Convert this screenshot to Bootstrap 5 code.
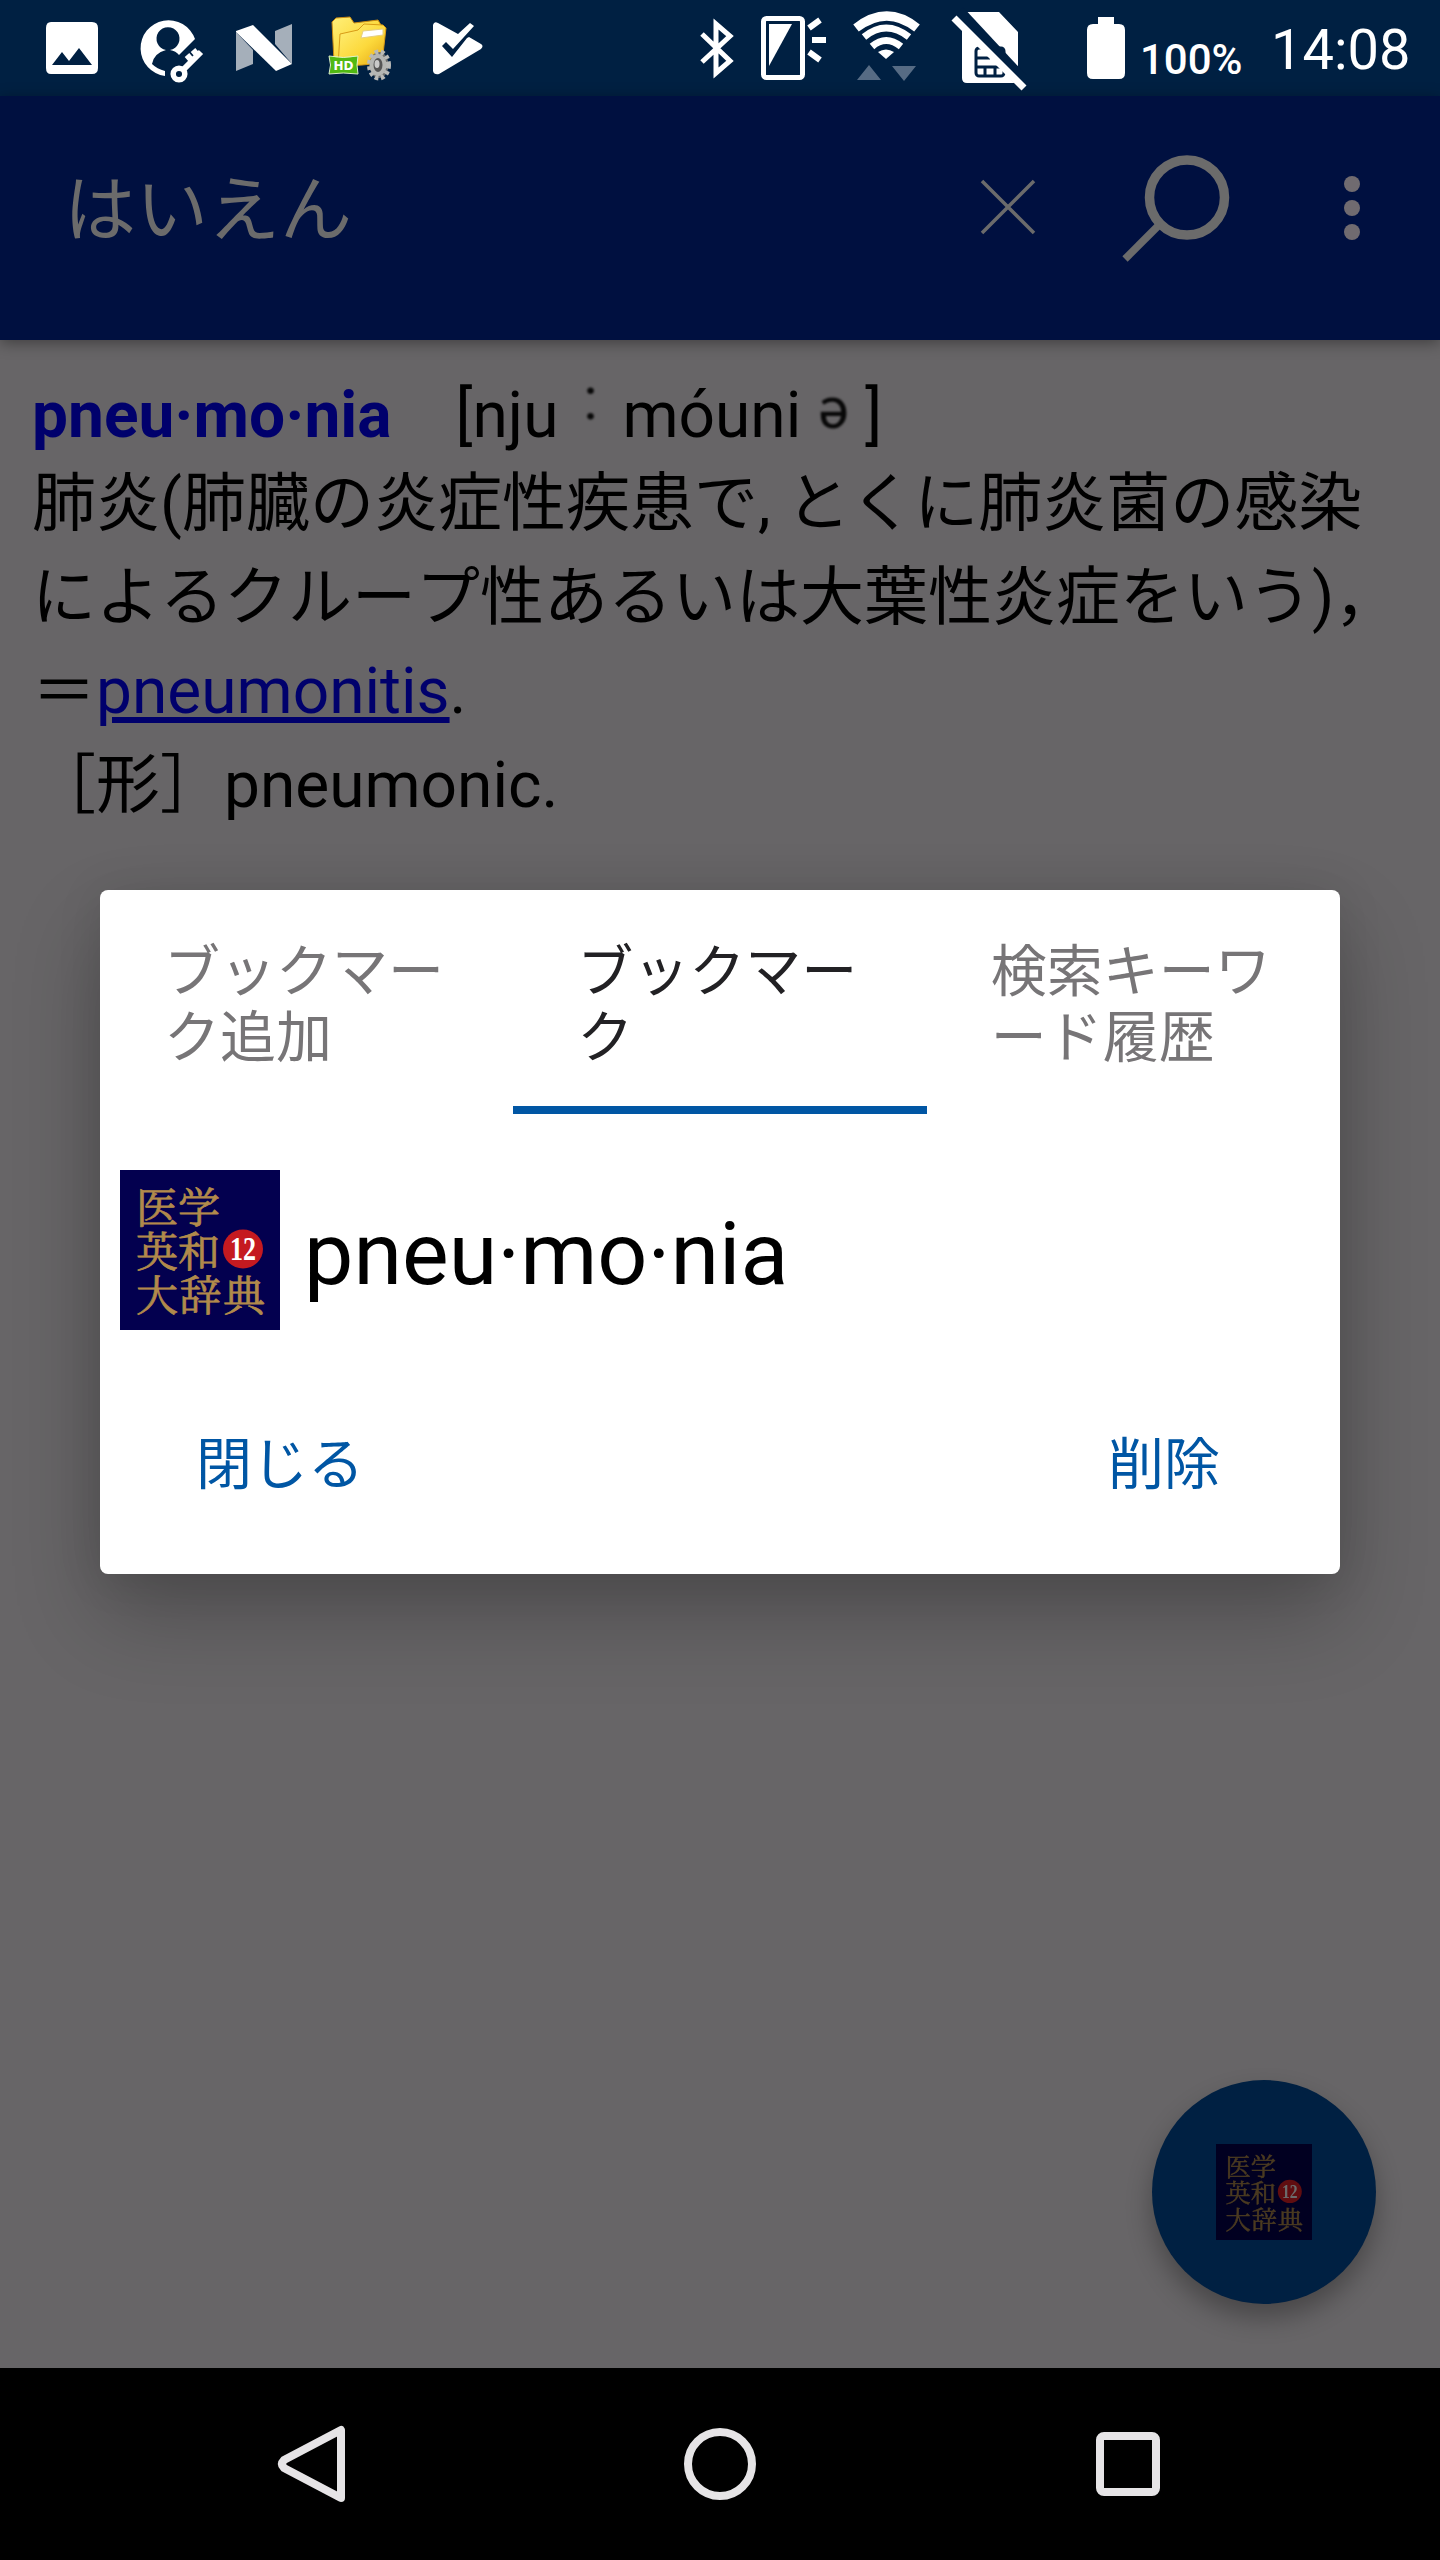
<!DOCTYPE html>
<html lang="ja">
<head>
<meta charset="utf-8">
<meta name="viewport" content="width=device-width, initial-scale=1">
<title>医学英和大辞典</title>
<link rel="stylesheet" href="https://cdn.jsdelivr.net/npm/bootstrap@5.3.0/dist/css/bootstrap.min.css">
<script src="https://cdn.jsdelivr.net/npm/bootstrap@5.3.0/dist/js/bootstrap.bundle.min.js"></script>
<style>
body{font-family:Roboto,"Noto Sans CJK JP",sans-serif;background:#000;color:#000}
.screen{width:1440px;height:2560px;background:#676567}
.status-bar{height:96px;background:#002042;color:#fff}
.status-bar svg{height:96px;flex:none;display:block}
.battery-text{font-size:42px;line-height:1;padding-top:24px;font-weight:500;margin-left:11px;width:131px}
.clock{font-size:56px;line-height:1;padding-top:4px;width:169px}
.app-bar{height:244px;background:#001040;box-shadow:0 3px 14px rgba(0,0,0,.38);padding:0 0 0 64px}
.query{font-size:72px;line-height:1;color:#6b6b6b;padding-bottom:14px}
.app-bar svg{display:block;height:244px}
.entry{padding:29px 32px 0;font-size:64px;line-height:94px}
.entry p{margin:0;white-space:nowrap}
.entry .gloss{font-kerning:none}
.entry .headline{height:88px}
.entry b,.entry a{color:#00006c}
.entry a{text-decoration-thickness:6px;text-underline-offset:4px}
.gaiji{display:inline-block;width:64px;line-height:1;text-align:center;color:#080808;filter:blur(1px)}
.gaiji span{position:relative;display:inline-block}
.gaiji .long{font-size:60px;top:-18px;left:0}
.gaiji .schwa{font-size:58px;top:-9px;left:0}
.scrim{top:96px;height:2272px}
.dialog{width:1240px;height:684px;border:0;border-radius:8px;background:#fff;box-shadow:0 42px 88px rgba(0,0,0,.24),0 4px 46px rgba(0,0,0,.1)}
.dialog .nav-item{width:33.3333%}
.dialog .nav-link{height:224px;padding:49px 60px 0 64px;font-size:56px;line-height:66px;color:#777577;border-radius:0;white-space:nowrap}
.dialog .nav-link.active{background:none;color:#222124;border-bottom:8px solid #0056a4}
.word-row{padding:56px 0 0 20px;height:216px}
.word{font-size:88px;line-height:1;margin-left:24px;padding-top:7px}
.dialog .btn{font-size:56px;line-height:66px;color:#0056a4;padding:0;border:0}
.dialog-actions{padding:102px 120px 0 96px}
.fab{width:224px;height:224px;left:1152px;top:2080px;background:#002042;box-shadow:0 14px 26px rgba(0,0,0,.3)}
.fab svg{filter:brightness(.42)}
.cover-title{fill:#b18a4b;stroke:#b18a4b;stroke-width:.8px;font-family:"Noto Serif CJK JP","Noto Sans CJK JP",serif;font-size:42px}
.cover-number{fill:#fff;font-family:"Liberation Serif",serif;font-weight:700;font-size:33px}
.system-nav{height:192px;background:#000}
.system-nav svg{display:block}
</style>
</head>
<body>
<div class="screen position-relative d-flex flex-column overflow-hidden">
  <header class="status-bar d-flex align-items-center">
    <svg width="118" viewBox="0 0 118 96"><path fill="#fff" fill-rule="evenodd" d="M51 22h41q6 0 6 6v40q0 6-6 6H51q-5 0-5-6V28q0-6 5-6zM52 65h40L79 48 69 61l-7-9z"/></svg>
    <svg width="101" viewBox="118 0 101 96"><path fill="#fff" d="M195 39A28 28 0 1 0 165 76v-5q-8-2-13-7q2-11 14-14a11.500 11.500 0 1 1 4 0q6 1 9 5z"/><g stroke="#fff" fill="none"><circle cx="179" cy="74" r="5.800" stroke-width="5.500"/><path stroke-width="6" d="M183 70l18-18M187 55l6 7M193 50l6 7"/></g></svg>
    <svg width="92" viewBox="219 0 92 96"><path fill="#a5afba" d="M236 32l17 18v14l-17 7zM275 31l17-7v40l-17-20z"/><path fill="#fff" d="M236 31l17-6 39 39-16 7-40-39z"/></svg>
    <svg width="101" viewBox="311 0 101 96">
      <defs><linearGradient id="gold" x1="0" y1="0" x2="1" y2="1"><stop stop-color="#fff07a"/><stop offset=".55" stop-color="#fcd93c"/><stop offset="1" stop-color="#e3a410"/></linearGradient></defs>
      <path fill="url(#gold)" stroke="#c98a12" d="M334 62l-2-40 4-4 14-1 4 6 24-3 3 5 3 36z"/>
      <path fill="url(#gold)" stroke="#d89b16" d="M338 66l2-32 18-4 6-6 19 1 3 3-4 35-20 2z"/>
      <path fill="#fff" stroke="#e5cf80" d="M363 31l20-2v6l-22 3z"/>
      <path fill="#51b912" stroke="#dff3c8" d="M329 56q14 3 29 0q-2 9 0 18q-15-2-29 0q3-9 0-18z"/>
      <text x="343.500" y="69.500" text-anchor="middle" font-family="'DejaVu Sans',sans-serif" font-size="12" font-weight="700" fill="#fff">HD</text>
      <ellipse cx="379" cy="65" rx="9.500" ry="13" fill="#6d6e6d" stroke="#b9bab8" stroke-width="5" stroke-dasharray="3.500 2.600"/>
      <ellipse cx="378" cy="65" rx="6.500" ry="9" fill="#555" stroke="#b5b6b3" stroke-width="4"/><ellipse cx="377" cy="64" rx="2.500" ry="4" fill="#c9c9c9"/>
    </svg>
    <svg width="100" viewBox="412 0 100 96"><path fill="#fff" d="M433 25q1-4 5-2l20 11 12-11 4 3-21 23-7-7-4 4 10 11 15-19 2-1 12 7q3 2 0 5l-42 25q-5 1-6-3z"/></svg>
    <svg class="ms-auto" width="62" viewBox="684 0 62 96"><path fill="none" stroke="#fff" stroke-width="5" d="M702 34l28 27-14 12V24l14 12-28 26"/></svg>
    <svg width="91" viewBox="746 0 91 96"><rect x="763.500" y="18.500" width="39" height="59" rx="3" fill="none" stroke="#fff" stroke-width="5"/><path fill="#fff" d="M769 24h23l-23 42z"/><path stroke="#fff" stroke-width="6" d="M809 28l11-8M812 40h14M809 52l11 8"/></svg>
    <svg width="99" viewBox="837 0 99 96"><g fill="none" stroke="#fff" stroke-width="9"><path d="M856 28q31-24 61 0"/><path stroke-width="7" d="M864 37q22-18 45 0M872 46.500q14-12 29 0"/></g><path fill="#fff" d="M878 52q8-5 16 0l-8 7z"/><path fill="#566b84" d="M857 80l12-15 12 15zM892 66h24l-12 15z"/></svg>
    <svg width="136" viewBox="936 0 136 96"><path fill="#fff" d="M966 12h33l19 20v36L965 14zM962 29l56 54H967q-5 0-5-5z"/><g fill="none" stroke="#002042" stroke-width="3"><rect x="976" y="48" width="28" height="28" rx="3"/><path d="M976 58h14M976 67h28M985 67v9M995 67v9"/></g><path stroke="#002042" stroke-width="14" d="M958 12l66 71"/><path stroke="#fff" stroke-width="7" d="M954 18l70 70"/></svg>
    <svg width="57" viewBox="1072 0 57 96"><path fill="#fff" d="M1098 17h16v7h5q6 0 6 6v43q0 6-6 6h-26q-6 0-6-6V30q0-6 6-6h5z"/></svg>
    <div class="battery-text">100%</div>
    <div class="clock">14:08</div>
  </header>
  <nav class="app-bar navbar flex-nowrap">
    <span class="query">はいえん</span>
    <svg width="490" viewBox="950 96 490 244"><g fill="none" stroke="#6b6b6b"><path stroke-width="3.500" d="M982 181l52 52M1034 181l-52 52"/><circle cx="1187" cy="197.500" r="37.500" stroke-width="9.500"/><path stroke-width="7.500" d="M1160 224l-35 35"/></g><g fill="#706b70"><circle cx="1352" cy="184" r="8"/><circle cx="1352" cy="208" r="8"/><circle cx="1352" cy="232" r="8"/></g></svg>
  </nav>
  <main class="entry flex-grow-1">
    <p class="headline"><b>pneu·mo·nia</b>　[nju<span class="gaiji"><span class="long">:</span></span>móuni<span class="gaiji"><span class="schwa">ə</span></span>]</p>
    <p class="gloss">肺炎(肺臓の炎症性疾患で, とくに肺炎菌の感染</p>
    <p class="gloss">によるクループ性あるいは大葉性炎症をいう)，</p>
    <p>＝<a href="#">pneumonitis</a>.</p>
    <p>［形］pneumonic.</p>
  </main>
  <button class="fab btn rounded-circle border-0 p-0 position-absolute d-flex align-items-center justify-content-center" aria-label="辞書">
    <svg width="96" height="96" viewBox="0 0 160 160"><rect width="160" height="160" fill="#03004f"/><g class="cover-title"><text x="16" y="53">医学</text><text x="16" y="97">英和</text><text x="16" y="141" textLength="129">大辞典</text></g><ellipse cx="123" cy="79" rx="20" ry="19.500" fill="#e52026"/><text class="cover-number" x="110" y="90" textLength="26" lengthAdjust="spacingAndGlyphs">12</text></svg>
  </button>
  <footer class="system-nav d-flex">
    <svg width="1440" height="192" viewBox="0 2368 1440 192" fill="none" stroke="#e6e4e6" stroke-width="8"><path stroke-linejoin="round" d="M341 2430v68l-57-30q-4-4 0-8z"/><circle cx="720" cy="2464" r="32"/><rect x="1100" y="2436" width="56" height="56" rx="4"/></svg>
  </footer>
  <div class="scrim position-absolute start-0 w-100 d-flex align-items-center justify-content-center">
    <section class="dialog card" role="dialog">
      <ul class="nav flex-nowrap">
        <li class="nav-item"><a class="nav-link">ブックマー<br>ク追加</a></li>
        <li class="nav-item"><a class="nav-link active">ブックマー<br>ク</a></li>
        <li class="nav-item"><a class="nav-link">検索キーワ<br>ード履歴</a></li>
      </ul>
      <div class="word-row d-flex align-items-center">
        <svg width="160" height="160" viewBox="0 0 160 160"><rect width="160" height="160" fill="#03004f"/><g class="cover-title"><text x="16" y="53">医学</text><text x="16" y="97">英和</text><text x="16" y="141" textLength="129">大辞典</text></g><ellipse cx="123" cy="79" rx="20" ry="19.500" fill="#c51a20"/><text class="cover-number" x="110" y="90" textLength="26" lengthAdjust="spacingAndGlyphs">12</text></svg>
        <span class="word">pneu·mo·nia</span>
      </div>
      <div class="dialog-actions d-flex justify-content-between">
        <button class="btn">閉じる</button><button class="btn">削除</button>
      </div>
    </section>
  </div>
</div>
</body>
</html>
